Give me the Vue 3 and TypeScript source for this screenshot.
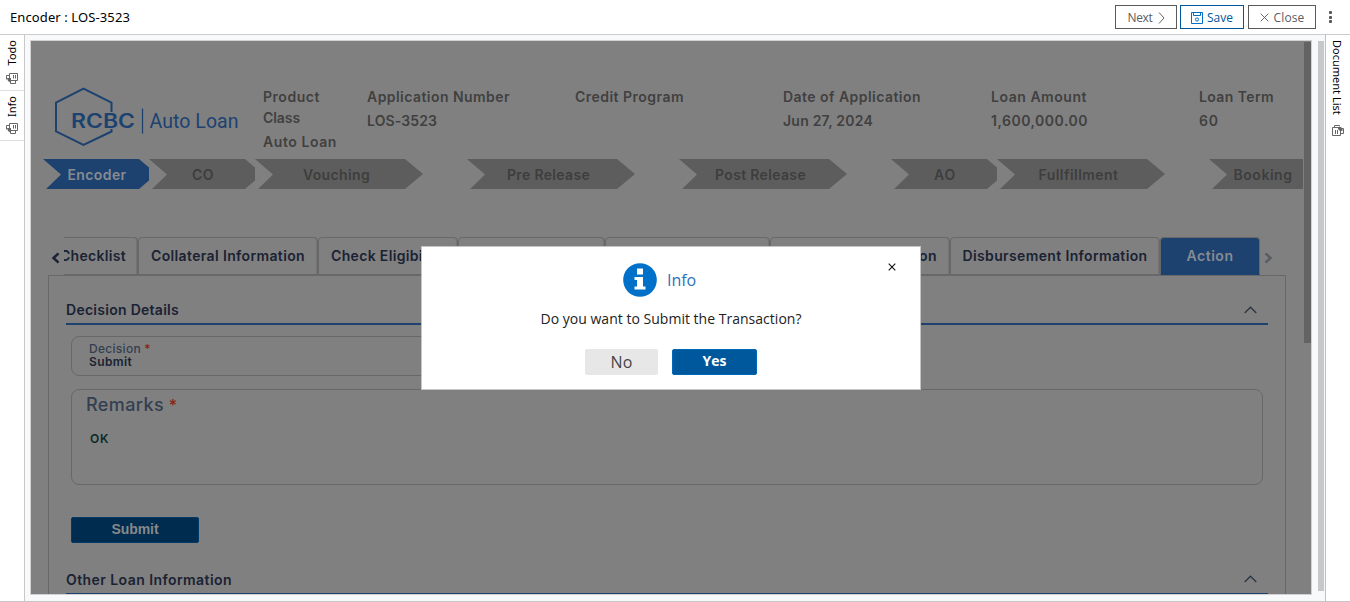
<script setup lang="ts">
import type { Directive } from 'vue'

interface Field { label: string; value: string; lw: number; vw: number }
interface Step { name: string; wide: boolean; active?: boolean; tw: number }
interface Tab { name: string; w: number; tw: number; active?: boolean }

// Spreads a label over the given width by adjusting its letter spacing.
const vFit: Directive<HTMLElement, number> = {
  mounted(el, binding) {
    const count = (el.textContent ?? '').trim().length
    if (!count || !binding.value) return
    const natural = el.getBoundingClientRect().width
    el.style.letterSpacing = `${(binding.value - natural) / count}px`
  },
}

const fields: Field[] = [
  { label: 'Application Number', value: 'LOS-3523', lw: 143, vw: 70 },
  { label: 'Credit Program', value: '', lw: 109, vw: 0 },
  { label: 'Date of Application', value: 'Jun 27, 2024', lw: 138, vw: 90 },
  { label: 'Loan Amount', value: '1,600,000.00', lw: 96, vw: 97 },
  { label: 'Loan Term', value: '60', lw: 75, vw: 20 },
]

const steps: Step[] = [
  { name: 'Encoder', wide: false, active: true, tw: 59 },
  { name: 'CO', wide: false, tw: 22 },
  { name: 'Vouching', wide: true, tw: 67 },
  { name: 'Pre Release', wide: true, tw: 83 },
  { name: 'Post Release', wide: true, tw: 91 },
  { name: 'AO', wide: false, tw: 22 },
  { name: 'Fullfillment', wide: true, tw: 80 },
  { name: 'Booking', wide: false, tw: 59 },
]

const tabs: Tab[] = [
  { name: 'Checklist', w: 74, tw: 64 },
  { name: 'Collateral Information', w: 180, tw: 154 },
  { name: 'Check Eligibility', w: 140, tw: 114 },
  { name: '', w: 147, tw: 0 },
  { name: '', w: 165, tw: 0 },
  { name: 'Valuation Information', w: 180, tw: 154 },
  { name: 'Disbursement Information', w: 210, tw: 185 },
  { name: 'Action', w: 100, tw: 47, active: true },
]
</script>

<template>
  <div class="app">
    <header class="bar">
      <span class="title"><span v-fit="120" class="ib">Encoder : LOS-3523</span></span>
      <button class="btn next"><span v-fit="25" class="ib">Next</span>
        <svg width="7" height="12" viewBox="0 0 7 12"><path d="M1 .5 6 6 1 11.5" fill="none" stroke="#666" /></svg>
      </button>
      <button class="btn save">
        <svg width="12" height="12" viewBox="0 0 12 12" fill="none" stroke="#0070c6"><path d="M.5.5h11v11H.5z" /><path d="M2.5.5v3h7v-3" /><circle cx="6" cy="7.5" r="1.6" /></svg>
        <span v-fit="26" class="ib">Save</span>
      </button>
      <button class="btn close">
        <svg width="9" height="9" viewBox="0 0 9 9"><path d="m.7.7 7.6 7.6M8.300.7.7 8.300" fill="none" stroke="#555" stroke-width=".9" /></svg>
        <span v-fit="31" class="ib">Close</span>
      </button>
      <span class="dots"><i /><i /><i /></span>
    </header>

    <div class="body">
      <aside class="side left">
        <div class="stab todo"><span class="vert">Todo</span>
          <svg width="12" height="11" viewBox="0 0 12 11"><path d="M3.500.5h8v7h-8zM7.500 2v3.500M9.500 2v3.500M3 2.500H.500v4M9.500 8v2.500h-5V9" fill="none" stroke="#666" /><path d="M1 5h4v5L2 8z" fill="#666" /></svg>
        </div>
        <div class="stab info"><span class="vert">Info</span>
          <svg width="12" height="11" viewBox="0 0 12 11"><path d="M3.500.5h8v7h-8zM7.500 2v3.500M9.500 2v3.500M3 2.500H.500v4M9.500 8v2.500h-5V9" fill="none" stroke="#666" /><path d="M1 5h4v5L2 8z" fill="#666" /></svg>
        </div>
      </aside>

      <main class="stage">
        <section class="frame">
          <div class="content">
            <div class="summary">
              <svg class="logo" width="186" height="62" viewBox="0 0 186 62">
                <path d="M57.500 25V15.500L29.500 1.500 2 15.500V44.500L29.500 58 57.500 44.500V42" fill="none" stroke="#1d4270" stroke-width="2" />
                <text x="17" y="40.500" textLength="64" lengthAdjust="spacingAndGlyphs" class="brand">RCBC</text>
                <path d="M88.500 21.500v25" stroke="#1d4270" stroke-width="1.300" />
                <text x="95.500" y="40.500" textLength="89" class="product">Auto Loan</text>
              </svg>
              <div class="fields">
                <div class="field">
                  <div><span v-fit="57" class="ib">Product</span><br><span v-fit="37" class="ib">Class</span></div>
                  <p><span v-fit="74" class="ib">Auto Loan</span></p>
                </div>
                <div v-for="f in fields" :key="f.label" class="field">
                  <div><span v-fit="f.lw" class="ib">{{ f.label }}</span></div>
                  <p><span v-fit="f.vw" class="ib">{{ f.value }}</span></p>
                </div>
              </div>
            </div>

            <div class="steps">
              <div v-for="s in steps" :key="s.name" class="cell" :class="{ wide: s.wide }">
                <div class="step" :class="{ active: s.active }"><span v-fit="s.tw" class="ib">{{ s.name }}</span></div>
              </div>
            </div>

            <div class="tabrow">
              <svg class="prev" width="9" height="12" viewBox="0 0 9 12"><path d="M7.500 1.300 2.500 6l5 4.700" fill="none" stroke="#1a2233" stroke-width="2.500" /></svg>
              <div class="tabs">
                <div v-for="(t, i) in tabs" :key="i" class="tab" :class="{ active: t.active, first: i === 0 }" :style="{ width: t.w + 'px' }">
                  <span v-fit="t.tw" class="ib">{{ t.name }}</span>
                </div>
              </div>
              <svg class="fwd" width="9" height="12" viewBox="0 0 9 12"><path d="m1.500 1.300 5 4.700-5 4.700" fill="none" stroke="#5a5c66" stroke-width="2.500" /></svg>
            </div>

            <div class="panel">
              <div class="sect"><span v-fit="113" class="ib">Decision Details</span>
                <svg width="13" height="8" viewBox="0 0 13 8"><path d="M.7 7 6.500 1.200 12.300 7" fill="none" stroke="#2b3444" stroke-width="1.300" /></svg>
              </div>
              <div class="decision">
                <div class="lab"><span v-fit="52" class="ib">Decision</span> <b>*</b></div>
                <div class="val"><span v-fit="43" class="ib">Submit</span></div>
              </div>
              <div class="remarks">
                <div class="rlab"><span v-fit="78" class="ib">Remarks</span> <b>*</b></div>
                <div class="ok"><span v-fit="19" class="ib">OK</span></div>
              </div>
              <button class="submit"><span v-fit="47" class="ib">Submit</span></button>
              <div class="sect other"><span v-fit="166" class="ib">Other Loan Information</span>
                <svg width="13" height="8" viewBox="0 0 13 8"><path d="M.7 7 6.500 1.200 12.300 7" fill="none" stroke="#2b3444" stroke-width="1.300" /></svg>
              </div>
            </div>
          </div>
          <div class="innerbar" />
        </section>
        <div class="outerbar" />
      </main>

      <aside class="side right">
        <span class="vert">Document List</span>
        <svg width="12" height="11" viewBox="0 0 12 11"><path d="M.5 2.500h8v8h-8zM3.500 5v4M5.500 5v4M2.500 2V.5h5v1M9 8.500h2.500v-5H10" fill="none" stroke="#666" /><path d="M6 2h3l1.500 2v2H8L6 4z" fill="#666" /></svg>
      </aside>
    </div>

    <div class="modal">
      <svg class="x" width="8" height="8" viewBox="0 0 8 8"><path d="m.7.7 6.600 6.600M7.300.7.7 7.300" stroke="#111" stroke-width="1.100" fill="none" /></svg>
      <div class="mhead">
        <svg width="34" height="34" viewBox="0 0 34 34"><circle cx="17" cy="17" r="16.800" fill="#0070c8" /><path d="M14 5.500h6v6h-6zM11.500 14h8.500v9.500h2.500v3H11.500v-3H14V17h-2.500z" fill="#fff" /></svg>
        <span v-fit="29" class="ib">Info</span>
      </div>
      <div class="msg"><span v-fit="261" class="ib">Do you want to Submit the Transaction?</span></div>
      <div class="acts">
        <button class="no"><span v-fit="22" class="ib">No</span></button>
        <button class="yes"><span v-fit="24" class="ib">Yes</span></button>
      </div>
    </div>
  </div>
</template>

<style>
body { margin: 0; background: #fff; overflow: hidden; }
</style>

<style scoped>
* { box-sizing: border-box; }
.app { position: relative; width: 1350px; height: 602px; display: flex; flex-direction: column; overflow: hidden; border-bottom: 1px solid #c6c6c6; background: #fff; font-family: "Noto Sans", "Open Sans", sans-serif; color: #000; }
.ib { display: inline-block; white-space: nowrap; }
button { font-family: inherit; padding: 0; margin: 0; }
svg { display: block; flex: none; }

.bar { height: 35px; flex: none; border-bottom: 1px solid #ccc; display: flex; align-items: center; }
.title { flex: 1; padding-left: 10px; font-size: 13px; }
.btn { height: 24px; background: #fff; border: 1px solid #5a5a5a; font: 400 12px "Open Sans", sans-serif; color: #5c5c5c; display: flex; align-items: center; justify-content: center; }
.btn svg { margin-top: 1px; }
.next { width: 62px; margin-right: 3px; gap: 5px; }
.save { width: 64px; margin-right: 4px; gap: 4px; border-color: #00579b; color: #00579b; }
.close { width: 68px; gap: 5px; }
.dots { width: 34px; height: 12px; padding-left: 13px; display: flex; flex-direction: column; justify-content: space-between; }
.dots i { width: 3px; height: 3px; border-radius: 1px; background: #555; }

.body { flex: 1; display: flex; min-height: 0; }
.side { font-size: 11px; }
.left { width: 25px; border-right: 1px solid #c8c8c8; }
.right { width: 25px; border-left: 1px solid #c0c0c0; padding: 5px 0 0 6px; }
.vert { writing-mode: vertical-rl; line-height: 12px; display: block; }
.left .vert { transform: rotate(180deg); }
.stab { border-bottom: 1px solid #ddd; padding-left: 6px; display: flex; flex-direction: column; justify-content: space-between; }
.todo { height: 56px; padding-top: 5px; padding-bottom: 6px; }
.info { height: 50px; padding-top: 5px; padding-bottom: 6px; }
.right .vert { height: 85px; margin-left: -1px; }

.stage { flex: 1; display: flex; padding: 5px 1px 6px 5px; background: #f8f9fb; min-width: 0; }
.frame { width: 1282px; border: 1px solid #d2d2d2; background: #808080; display: flex; overflow: hidden; font-family: Inter, sans-serif; font-weight: 500; font-size: 14px; }
.content { width: 1272px; flex: none; overflow: hidden; }
.innerbar { width: 7px; height: 301px; margin: 1px 0 0 1px; background: #636363; }
.outerbar { width: 6px; height: 550px; margin: 1px 0 0 6px; background: #c8c8c8; }

.summary { display: flex; height: 118px; padding-left: 23px; color: #404040; font-weight: 600; }
.logo { margin: 46px 23px 0 0; }
.brand { font: 600 19.500px Inter, sans-serif; fill: #1d4270; }
.product { font: 400 19.500px Roboto, sans-serif; fill: #1d4270; }
.fields { display: grid; grid-template-columns: 104px repeat(5, 208px); padding-top: 45px; line-height: 21px; }
.field p { margin: 3px 0 0; }

.steps { display: flex; padding-left: 12px; height: 30px; }
.cell { width: 106px; flex: none; }
.cell.wide { width: 212px; }
.step { width: 107px; height: 30px; padding-left: 1px; line-height: 31px; text-align: center; background: #5d5d5d; color: #3e3e3e; font-weight: 600; clip-path: polygon(0 0, 96px 0, 106px 8.500px, 106px 21.500px, 96px 30px, 3px 30px, 18px 15.500px); }
.wide .step { width: 168px; padding-right: 6px; clip-path: polygon(0 0, 150px 0, 168px 15px, 150px 30px, 3px 30px, 18px 15.500px); }
.step.active { background: #1d4270; color: #868b92; }

.tabrow { display: flex; margin-top: 48px; padding-left: 20px; height: 38px; align-items: center; }
.prev { margin: 3px 4px 0 0; }
.tabs { display: flex; height: 38px; color: #1a2233; }
.tab { height: 38px; line-height: 36px; text-align: center; font-weight: 600; border: 1px solid #686868; border-radius: 4px 4px 0 0; flex: none; overflow: hidden; box-shadow: inset -1px 0 0 #747474; }
.tab.first { border-left: 0; border-top-left-radius: 0; text-align: left; text-indent: -2px; }
.tab.active { background: #1d4270; border-bottom-color: #1d4270; color: #868b92; box-shadow: none; }
.fwd { margin: 3px 0 0 4px; }

.panel { width: 1238px; height: 400px; margin-left: 17px; border: 1px solid #686868; padding: 18px 17px 0; color: #1a2233; }
.sect { height: 31px; border-bottom: 2px solid #1d4270; display: flex; justify-content: space-between; line-height: 31px; font-weight: 600; padding-right: 11px; }
.sect svg { margin-top: 12px; }
.decision { height: 40px; width: 590px; margin: 11px 0 0 5px; border: 1px solid #686868; border-radius: 8px; padding: 5px 0 0 17px; font-size: 12px; font-weight: 600; line-height: 13px; }
.lab, .rlab { color: #333f50; }
.lab { font-weight: 500; }
.lab b, .rlab b { color: #8c2119; font-weight: 500; }
.remarks { width: 1192px; height: 96px; margin: 13px 0 0 5px; border: 1px solid #686868; border-radius: 8px; padding: 4px 0 0 14px; }
.rlab { font-size: 18px; line-height: 22px; }
.rlab b { font-size: 16px; }
.ok { margin: 14px 0 0 4px; font-size: 12px; line-height: 18px; font-weight: 600; color: #0b2a25; }
.submit { display: block; width: 128px; height: 26px; margin: 32px 0 0 5px; border: 1px solid #003a68; border-radius: 2px; background: #002c50; color: #888; font: 700 14px/22px "Liberation Sans", sans-serif; }
.submit .ib { position: relative; top: -1px; }
.other { margin-top: 20px; height: 32px; line-height: 33px; }
.other svg { margin-top: 12px; }

.modal { position: absolute; left: 421px; top: 246px; width: 500px; height: 144px; background: #fff; border: 1px solid #c4c4c4; font-family: "Open Sans", sans-serif; }
.x { position: absolute; left: 466px; top: 16px; }
.mhead { display: flex; align-items: center; gap: 10px; padding: 16px 0 0 201px; font-size: 16px; font-weight: 400; color: #2b72bd; }
.msg { text-align: center; font-size: 14px; line-height: 20px; margin-top: 12px; color: #222; }
.acts { display: flex; gap: 14px; margin: 20px 0 0 163px; }
.no { width: 73px; height: 26px; border: 0; border-radius: 2px; background: #e7e7e7; color: #444; font-size: 16px; font-weight: 400; line-height: 26px; }
.yes { width: 85px; height: 26px; border: 1px solid #0068b8; border-radius: 2px; background: #00589c; color: #fff; font-size: 14px; font-weight: 700; line-height: 22px; }
.yes .ib { position: relative; top: -1px; }
</style>
